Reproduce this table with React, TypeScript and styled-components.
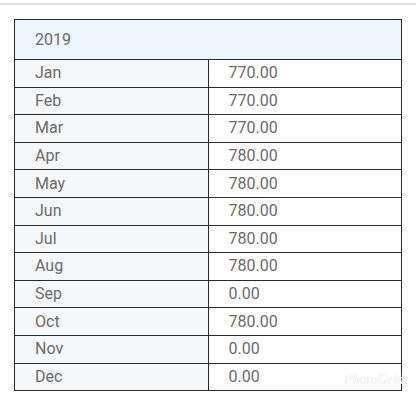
import React from "react";
import styled, { createGlobalStyle } from "styled-components";

const Global = createGlobalStyle`
  html, body { margin: 0; padding: 0; background: #ffffff; }
  body { font-family: Roboto, "Noto Sans", Arial, sans-serif; }
`;

const Page = styled.div`
  position: relative;
  width: 416px;
  height: 400px;
  background: #fff;
  overflow: hidden;
`;

const TopRule = styled.div`
  margin-top: 3px;
  height: 2px;
  background: #e2e2e2;
`;

const Wrap = styled.div`
  padding: 14px 14px 0 14px;
`;

const Table = styled.table`
  width: 388px;
  border-collapse: collapse;
  table-layout: fixed;
  border: 1.5px solid #2a2a2a;
  font-size: 16px;
  color: #6b6b6b;
`;

const HeadCell = styled.th`
  height: 39px;
  padding: 0 0 0 20px;
  text-align: left;
  font-weight: 400;
  background: #eef6ff;
  border-bottom: 1.5px solid #2a2a2a;
`;

const Cell = styled.td<{ $label?: boolean }>`
  height: 26.6px;
  padding: 0 0 0 20px;
  background: ${(p) => (p.$label ? "#f6f7f9" : "#ffffff")};
  border: 1.5px solid #2a2a2a;
  line-height: 26px;
`;

const Watermark = styled.div`
  position: absolute;
  right: 12px;
  bottom: 12px;
  font-family: "Liberation Serif", serif;
  font-style: italic;
  font-size: 14px;
  color: #fff;
  text-shadow: 0 0 1px #ccc;
`;

const rows: [string, string][] = [
  ["Jan", "770.00"],
  ["Feb", "770.00"],
  ["Mar", "770.00"],
  ["Apr", "780.00"],
  ["May", "780.00"],
  ["Jun", "780.00"],
  ["Jul", "780.00"],
  ["Aug", "780.00"],
  ["Sep", "0.00"],
  ["Oct", "780.00"],
  ["Nov", "0.00"],
  ["Dec", "0.00"],
];

export default function App() {
  return (
    <Page>
      <Global />
      <TopRule />
      <Wrap>
        <Table>
          <thead>
            <tr>
              <HeadCell colSpan={2}>2019</HeadCell>
            </tr>
          </thead>
          <tbody>
            {rows.map(([m, v]) => (
              <tr key={m}>
                <Cell $label>{m}</Cell>
                <Cell>{v}</Cell>
              </tr>
            ))}
          </tbody>
        </Table>
      </Wrap>
      <Watermark>PhotoGrid</Watermark>
    </Page>
  );
}
